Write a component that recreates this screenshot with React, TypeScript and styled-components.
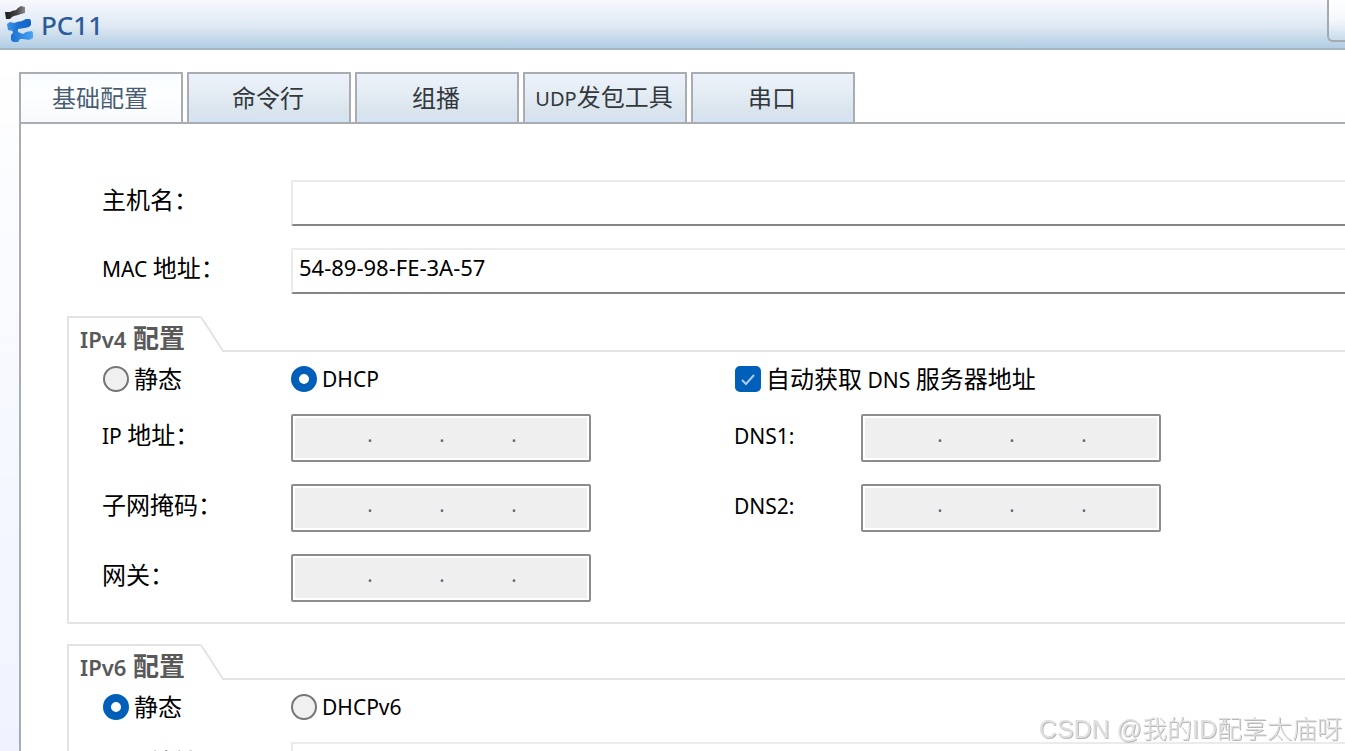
import React, { useState } from "react";
import styled, { createGlobalStyle } from "styled-components";

const GlobalStyle = createGlobalStyle`
  *, *::before, *::after { box-sizing: border-box; }
  body {
    margin: 0;
    background: #fff;
    color: #000;
    font: 24px/24px "Noto Sans", "Noto Sans CJK SC", sans-serif;
  }
  button, input { font: inherit; color: inherit; margin: 0; padding: 0; }
`;

const Window = styled.div`
  display: flex;
  flex-direction: column;
  height: 100vh;
  overflow: hidden;
`;

const TitleBar = styled.header`
  display: flex;
  flex: none;
  align-items: center;
  height: 50px;
  padding-left: 4px;
  border-bottom: 2px solid #a8b4be;
  background: linear-gradient(#f8f9fe 0%, #eef2fb 20%, #dfe9f3 55%, #c4d9ea 80%, #b1cde5 100%);
`;

const Title = styled.h1`
  flex: 1;
  margin: 0;
  padding: 2px 0 0 5px;
  color: #2c5c98;
  font-size: 26px;
  font-weight: 500;
`;

const WindowButton = styled.button`
  align-self: flex-start;
  width: 18px;
  height: 42px;
  border: solid #a6aaad;
  border-width: 0 0 2px 2px;
  border-radius: 0 0 0 6px;
  background: linear-gradient(#fff 0%, #f4f8fc 50%, #c9dcec 100%);
`;

const Workspace = styled.main`
  display: flex;
  flex: 1;
  flex-direction: column;
  min-height: 0;
  padding: 22px 0 0 19px;
  background: linear-gradient(#fff 0%, #fbfcff 20%, #eff3ff 100%);
  background-size: 19px 100%;
  background-repeat: no-repeat;
`;

const TabList = styled.div`
  display: flex;
  flex: none;
  gap: 4px;
`;

const Tab = styled.button<{ $active: boolean }>`
  width: 164px;
  height: 50px;
  padding-right: 2px;
  border: 2px solid #a9adb1;
  border-bottom: 0;
  color: ${(p) => (p.$active ? "#495d72" : "#33383d")};
  background: ${(p) =>
    p.$active
      ? "linear-gradient(#f9fdff, #fdfeff 50%, #f8f9fb)"
      : "linear-gradient(#ecf2fb 0%, #e4ecf4 40%, #d9e4ed 80%, #d5e3f4 100%)"};
  white-space: nowrap;
`;

const Panel = styled.section`
  display: flex;
  flex: 1;
  flex-direction: column;
  min-height: 0;
  padding-top: 56px;
  border: solid #a9adb1;
  border-width: 2px 0 0 2px;
  background: #fff;
`;

const TabLatin = styled.span`
  font-size: 20px;
`;

const Latin = styled.span`
  font-size: 21px;
`;

const GeneralFields = styled.div`
  display: flex;
  flex: none;
  flex-direction: column;
  gap: 22px;
  margin-bottom: 22px;
  padding-left: 81px;
`;

const Field = styled.div`
  display: flex;
  flex: none;
  align-items: center;
  height: 46px;
`;

const FieldLabel = styled.label`
  flex: none;
  width: 189px;
  padding-bottom: 6px;
  white-space: nowrap;
`;

const TextInput = styled.input`
  flex: 1;
  min-width: 0;
  height: 46px;
  padding: 0 0 8px 6px;
  border: 2px solid #ebebeb;
  border-right: 0;
  border-bottom-color: #858585;
  border-radius: 2px 0 0 2px;
  background: #fff;
  font-size: 22px;
  outline: none;
`;

const Group = styled.section`
  flex: none;
  margin: 0 0 20px 46px;
`;

const GroupHeader = styled.div`
  display: flex;
  height: 36px;
`;

const GroupTitle = styled.h2`
  width: 134px;
  margin: 0;
  padding: 8px 0 0 11px;
  border: solid #e3e3e3;
  border-width: 2px 0 0 2px;
  color: #595959;
  font-size: 26px;
  font-weight: 700;
  white-space: nowrap;
`;

const TitleLatin = styled.span`
  font-size: 22px;
  font-weight: 600;
`;

const GroupRule = styled.div`
  flex: 1;
  border-bottom: 2px solid #e3e3e3;
`;

const GroupBody = styled.div`
  display: flex;
  flex-direction: column;
  gap: 22px;
  padding: 14px 0 20px 33px;
  border: solid #e3e3e3;
  border-width: 0 0 2px 2px;
`;

const Row = styled.div`
  display: grid;
  grid-template-columns: 189px 443px 127px 300px;
  align-items: center;
`;

const Choice = styled.label<{ $inset?: boolean }>`
  display: flex;
  align-items: center;
  gap: 5px;
  height: 26px;
  padding-left: ${(p) => (p.$inset ? 1 : 0)}px;
  white-space: nowrap;
`;

const Radio = styled.input`
  appearance: none;
  flex: none;
  width: 26px;
  height: 26px;
  border: 2px solid #757575;
  border-radius: 50%;
  background: #f0f0f0;
  &:checked {
    border: 8px solid #005fb8;
    background: #fff;
  }
`;

const CheckMark = styled.span`
  display: grid;
  flex: none;
  width: 26px;
  height: 26px;
  & > * { grid-area: 1 / 1; }
  & > svg { pointer-events: none; }
`;

const CheckInput = styled.input`
  appearance: none;
  width: 26px;
  height: 26px;
  border: 2px solid #757575;
  border-radius: 5px;
  background: #f0f0f0;
  &:checked { border-color: #005fb8; background: #005fb8; }
`;

const RowLabel = styled.span`
  padding-bottom: 6px;
  white-space: nowrap;
`;

const AddressBox = styled.div`
  display: flex;
  align-items: center;
  width: 300px;
  height: 48px;
  padding-left: 7px;
  border: 2px solid #8c8c8c;
  border-radius: 2px;
  background: #efefef;
  box-shadow: inset 0 0 0 2px #fff;
`;

const Octet = styled.input`
  width: 68px;
  height: 36px;
  border: 0;
  background: transparent;
  font-size: 22px;
  text-align: center;
`;

const Dot = styled.span`
  display: flex;
  justify-content: center;
  width: 4px;
  padding-bottom: 6px;
  color: #6b6478;
  font-size: 20px;
`;

const Watermark = styled.div`
  position: fixed;
  right: 3px;
  bottom: 7px;
  color: #e0e0e0;
  font: 300 25px/30px "Liberation Sans", "Noto Sans CJK SC", sans-serif;
  text-shadow: 1px 1px 0 #b8b8b8;
  white-space: nowrap;
  pointer-events: none;
`;

function Logo() {
  return (
    <svg width="32" height="40" viewBox="0 0 32 40" aria-hidden="true">
      <defs>
        <linearGradient id="arm" x1="0" y1="0" x2="1" y2="0">
          <stop offset="0" stopColor="#1d1d1d" />
          <stop offset="0.6" stopColor="#444" />
          <stop offset="1" stopColor="#8a8a8a" />
        </linearGradient>
        <linearGradient id="upper" x1="0" y1="0" x2="1" y2="0">
          <stop offset="0" stopColor="#3d93e6" />
          <stop offset="0.5" stopColor="#1c70d0" />
          <stop offset="1" stopColor="#1463c0" />
        </linearGradient>
        <linearGradient id="lower" x1="0" y1="0" x2="1" y2="0">
          <stop offset="0" stopColor="#1b70cf" />
          <stop offset="0.5" stopColor="#2f8ae6" />
          <stop offset="1" stopColor="#4ba3f2" />
        </linearGradient>
      </defs>
      <path d="M1 8 L6 8 L8 7 L12 6 L14 4 L17 2 L21 3 L21 9 L17 10 L14 11 L10 12 L8 13 L6 15 L2 15 Z" fill="url(#arm)" />
      <path d="M8 24 L14 22 L14 28 L19 30 L22 28 L28 27 L29 29 L29 34 L25 36 L19 35 L16 35 L14 38 L9 38 L7 36 L7 31 L9 29 Z" fill="url(#lower)" />
      <path d="M3 20 L6 18 L10 19 L13 18 L18 17 L22 15 L26 15 L27 17 L27 21 L25 23 L21 24 L14 25 L9 27 L4 26 Z" fill="url(#upper)" />
    </svg>
  );
}

function ConfigGroup({ name, children }: { name: string; children: React.ReactNode }) {
  return (
    <Group>
      <GroupHeader>
        <GroupTitle>
          <TitleLatin>{name}</TitleLatin> 配置
        </GroupTitle>
        <svg width="24" height="36" viewBox="0 0 24 36" aria-hidden="true">
          <path d="M0 1 L22 35 H24" fill="none" stroke="#e3e3e3" strokeWidth="2" />
        </svg>
        <GroupRule />
      </GroupHeader>
      <GroupBody>{children}</GroupBody>
    </Group>
  );
}

function AddressField({ id, label }: { id: string; label: React.ReactNode }) {
  return (
    <>
      <RowLabel id={id}>{label}</RowLabel>
      <AddressBox role="group" aria-labelledby={id}>
        {[0, 1, 2, 3].map((n) => (
          <React.Fragment key={n}>
            {n > 0 && <Dot>.</Dot>}
            <Octet disabled aria-labelledby={id} />
          </React.Fragment>
        ))}
      </AddressBox>
    </>
  );
}

const tabs: { id: string; label: React.ReactNode }[] = [
  { id: "basic", label: "基础配置" },
  { id: "cli", label: "命令行" },
  { id: "multicast", label: "组播" },
  { id: "udp", label: <><TabLatin>UDP</TabLatin>发包工具</> },
  { id: "serial", label: "串口" },
];

export default function App() {
  const [active, setActive] = useState("basic");

  return (
    <Window>
      <GlobalStyle />
      <TitleBar>
        <Logo />
        <Title>PC11</Title>
        <WindowButton type="button" aria-label="最小化" />
      </TitleBar>
      <Workspace>
        <TabList role="tablist">
          {tabs.map((tab) => (
            <Tab
              key={tab.id}
              type="button"
              role="tab"
              aria-selected={active === tab.id}
              $active={active === tab.id}
              onClick={() => setActive(tab.id)}
            >
              {tab.label}
            </Tab>
          ))}
        </TabList>
        <Panel role="tabpanel">
          <GeneralFields>
            <Field>
              <FieldLabel htmlFor="host">主机名：</FieldLabel>
              <TextInput id="host" />
            </Field>
            <Field>
              <FieldLabel htmlFor="mac"><Latin>MAC </Latin>地址：</FieldLabel>
              <TextInput id="mac" defaultValue="54-89-98-FE-3A-57" />
            </Field>
          </GeneralFields>

          <ConfigGroup name="IPv4">
            <Row>
              <Choice $inset>
                <Radio type="radio" name="ipv4" />
                静态
              </Choice>
              <Choice>
                <Radio type="radio" name="ipv4" defaultChecked />
                <Latin>DHCP</Latin>
              </Choice>
              <Choice $inset>
                <CheckMark>
                  <CheckInput type="checkbox" defaultChecked />
                  <svg width="26" height="26" viewBox="0 0 26 26" aria-hidden="true">
                    <path d="M7 14 L11 18 L19 9" fill="none" stroke="#a9cdf0" strokeWidth="2" />
                  </svg>
                </CheckMark>
                <span>自动获取<Latin> DNS </Latin>服务器地址</span>
              </Choice>
            </Row>
            <Row>
              <AddressField id="ip" label={<><Latin>IP </Latin>地址：</>} />
              <AddressField id="dns1" label={<Latin>DNS1:</Latin>} />
            </Row>
            <Row>
              <AddressField id="mask" label="子网掩码：" />
              <AddressField id="dns2" label={<Latin>DNS2:</Latin>} />
            </Row>
            <Row>
              <AddressField id="gateway" label="网关：" />
            </Row>
          </ConfigGroup>

          <ConfigGroup name="IPv6">
            <Row>
              <Choice $inset>
                <Radio type="radio" name="ipv6" defaultChecked />
                静态
              </Choice>
              <Choice>
                <Radio type="radio" name="ipv6" />
                <Latin>DHCPv6</Latin>
              </Choice>
            </Row>
            <Field>
              <FieldLabel htmlFor="ipv6-address"><Latin>IPv6 </Latin>地址：</FieldLabel>
              <TextInput id="ipv6-address" />
            </Field>
          </ConfigGroup>
        </Panel>
      </Workspace>
      <Watermark>CSDN @我的ID配享太庙呀</Watermark>
    </Window>
  );
}
